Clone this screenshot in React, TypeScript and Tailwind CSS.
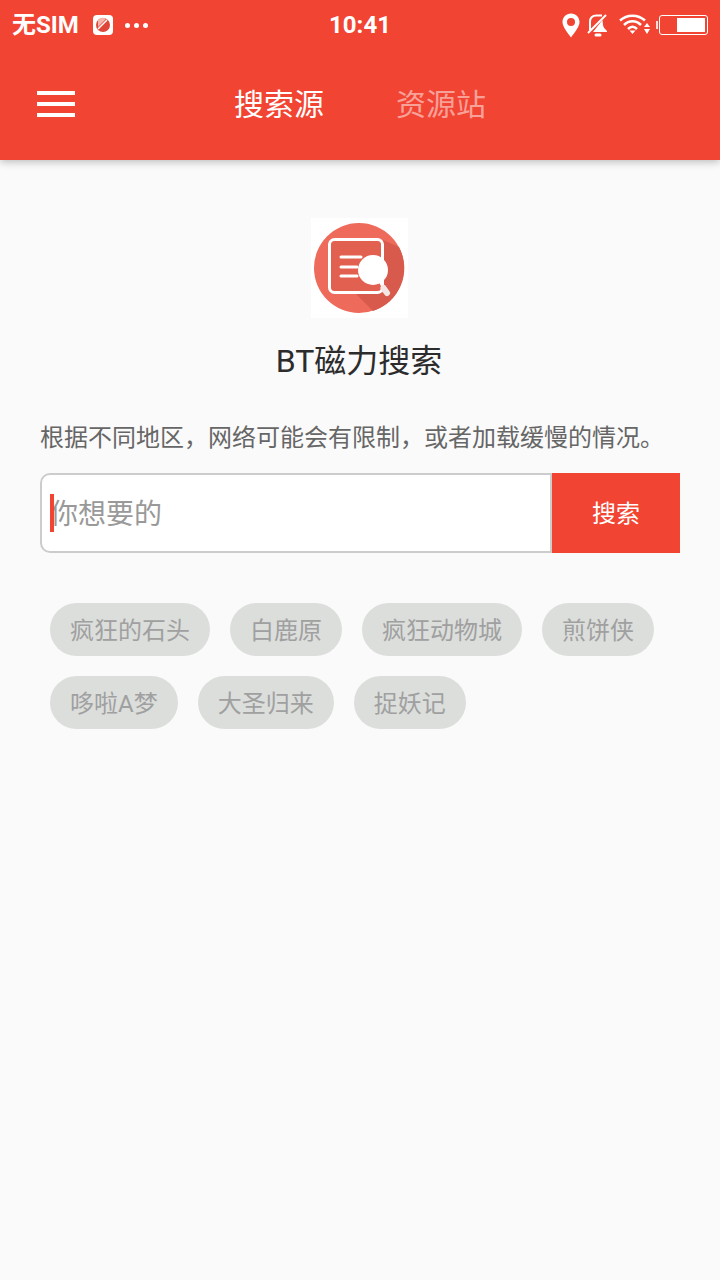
const hotWords = ['疯狂的石头', '白鹿原', '疯狂动物城', '煎饼侠', '哆啦A梦', '大圣归来', '捉妖记'];

function CarrierIcon() {
  return (
    <svg width="20" height="20" viewBox="0 0 20 20">
      <rect width="20" height="20" rx="4" fill="#fff" />
      <circle cx="10" cy="10" r="7" fill="#e0453a" />
      <path d="M5 4.500 A7 7 0 0 1 13 4 L5 12 Z" fill="#f6b5ad" />
      <path d="M5 14 L14 5" stroke="#fff" strokeWidth="1.500" />
    </svg>
  );
}

function PinIcon() {
  return (
    <svg width="18" height="25" viewBox="0 0 18 25">
      <path
        fillRule="evenodd"
        d="M9 0.500 C4 0.500 0.500 4.200 0.500 9 C0.500 14 5.500 19.500 9 24.500 C12.500 19.500 17.500 14 17.500 9 C17.500 4.200 14 0.500 9 0.500 Z M9 5 A4 4 0 1 1 9 13 A4 4 0 1 1 9 5 Z"
        fill="#fff"
      />
    </svg>
  );
}

function BellOffIcon() {
  return (
    <svg width="22" height="23" viewBox="0 0 22 23" fill="none">
      <path d="M3 16 L3 8 C3 3.500 6 1.500 9.500 1.500 L15 1.500" stroke="#fff" strokeWidth="2" />
      <path d="M15.500 6 L16 11 C16.300 13.500 18 15 20 17 L20 18 L6 18 Z" fill="#fff" />
      <path d="M1 19 L19 1" stroke="#fff" strokeWidth="2" />
      <rect x="7.500" y="19.500" width="7" height="3" rx="1.500" fill="#fff" />
    </svg>
  );
}

function WifiIcon() {
  return (
    <svg width="32" height="22" viewBox="0 0 32 22" fill="none">
      <path d="M1 6.500 C8 0 19 0 26 6.500" stroke="#fff" strokeWidth="2.500" />
      <path d="M5 11 C10 6 17 6 22 11" stroke="#fff" strokeWidth="2.500" />
      <path d="M9 15 C12 12 15 12 18 15" stroke="#fff" strokeWidth="2.500" />
      <path d="M10.500 16.500 L16.500 16.500 L13.500 20 Z" fill="#fff" />
      <path d="M28 9 L31 13 L25 13 Z M28 20 L31 15 L25 15 Z" fill="#fff" />
    </svg>
  );
}

function BatteryIcon() {
  return (
    <div className="flex items-center">
      <div className="w-[2px] h-[8px] bg-white/80 mr-[1px]" />
      <div className="w-[49px] h-[20px] rounded-[3px] border border-white p-[2px] flex justify-end">
        <div className="w-[28px] h-full bg-white" />
      </div>
    </div>
  );
}

function AppLogo() {
  return (
    <svg width="97" height="100" viewBox="0 0 97 100" className="block">
      <rect width="97" height="100" fill="#fff" />
      <circle cx="48" cy="50" r="45" fill="#ee6a5a" />
      <path d="M72 22 L88 29 A45 45 0 0 1 62 93 L44 75 L72 75 Z" fill="#d85a4c" />
      <rect x="18.500" y="21.500" width="53" height="53" rx="5" fill="#e2604f" stroke="#fff" strokeWidth="3" />
      <path d="M30 39 H50 M30 49 H46 M30 58 H46" stroke="#fff" strokeWidth="3" strokeLinecap="round" />
      <path d="M68 62 L73 71" stroke="#fff" strokeWidth="2.500" />
      <path d="M72.500 70 L76 75" stroke="#f4e6e3" strokeWidth="6" strokeLinecap="round" />
      <circle cx="62" cy="52" r="15" fill="#fff" />
    </svg>
  );
}

export default function App() {
  return (
    <div className="w-[720px] h-[1280px] bg-[#fafafa] overflow-hidden font-['Roboto','Noto_Sans_CJK_SC',sans-serif]">
      <header className="h-[160px] bg-[#f24432] shadow-[0_2px_8px_rgba(0,0,0,0.25)] text-white">
        <div className="h-[50px] flex items-center justify-between px-[12px]">
          <div className="w-[200px] flex items-center">
            <span className="text-[24px] font-bold">无SIM</span>
            <span className="ml-[14px]"><CarrierIcon /></span>
            <span className="ml-[12px] flex gap-[4px]">
              <span className="w-[5px] h-[5px] rounded-full bg-white" />
              <span className="w-[5px] h-[5px] rounded-full bg-white" />
              <span className="w-[5px] h-[5px] rounded-full bg-white" />
            </span>
          </div>
          <span className="text-[24px] font-bold">10:41</span>
          <div className="w-[200px] flex items-center justify-end gap-[7px]">
            <PinIcon />
            <BellOffIcon />
            <span className="ml-[3px] mr-[-2px]"><WifiIcon /></span>
            <BatteryIcon />
          </div>
        </div>
        <div className="h-[110px] flex items-center">
          <button className="ml-[37px] mb-[2px] w-[38px] flex flex-col gap-[7px]">
            <span className="h-[4px] bg-white" />
            <span className="h-[4px] bg-white" />
            <span className="h-[4px] bg-white" />
          </button>
          <div className="ml-[159px] mb-[2px] flex gap-[72px] text-[30px]">
            <span>搜索源</span>
            <span className="text-white/50">资源站</span>
          </div>
        </div>
      </header>

      <main className="px-[40px]">
        <div className="pt-[58px] pr-[2px] flex flex-col items-center">
          <AppLogo />
          <h1 className="mt-[18px] text-[32px] leading-[50px] text-[#2c2c2c]">BT磁力搜索</h1>
        </div>
        <p className="mt-[34px] text-[24px] leading-[36px] text-[#666] whitespace-nowrap">
          根据不同地区，网络可能会有限制，或者加载缓慢的情况。
        </p>
        <div className="mt-[17px] flex h-[80px]">
          <div className="relative flex-1 bg-white border-2 border-[#ccc] rounded-l-[10px] flex items-center pl-[8px] pt-[4px] text-[28px] text-[#999]">
            <span className="absolute left-[8px] top-[19px] w-[4px] h-[38px] bg-[#f24432]" />
            你想要的
          </div>
          <button className="w-[128px] bg-[#f24432] text-white text-[24px] pt-[2px]">搜索</button>
        </div>
        <div className="mt-[50px] px-[10px] flex flex-wrap gap-[20px]">
          {hotWords.map((word) => (
            <span key={word} className="h-[53px] px-[20px] pt-[2px] rounded-full bg-[#dcdedc] text-[#a0a0a0] text-[24px] flex items-center">
              {word}
            </span>
          ))}
        </div>
      </main>
    </div>
  );
}
